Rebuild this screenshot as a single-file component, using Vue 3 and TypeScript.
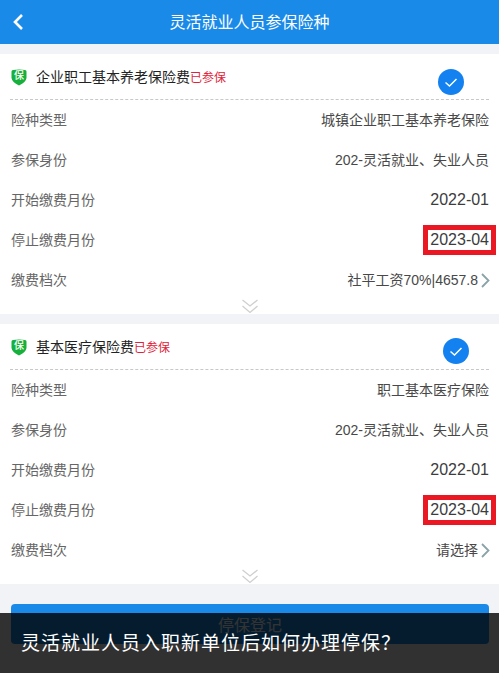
<script setup lang="ts">
interface Row { label: string; value: string; big?: boolean; mark?: boolean; arrow?: boolean }
interface Card { title: string; cls: string; rows: Row[] }
const cards: Card[] = [
  {
    title: '企业职工基本养老保险费',
    cls: 'first',
    rows: [
      { label: '险种类型', value: '城镇企业职工基本养老保险' },
      { label: '参保身份', value: '202-灵活就业、失业人员' },
      { label: '开始缴费月份', value: '2022-01', big: true },
      { label: '停止缴费月份', value: '2023-04', big: true, mark: true },
      { label: '缴费档次', value: '社平工资70%|4657.8', arrow: true },
    ],
  },
  {
    title: '基本医疗保险费',
    cls: 'second',
    rows: [
      { label: '险种类型', value: '职工基本医疗保险' },
      { label: '参保身份', value: '202-灵活就业、失业人员' },
      { label: '开始缴费月份', value: '2022-01', big: true },
      { label: '停止缴费月份', value: '2023-04', big: true, mark: true },
      { label: '缴费档次', value: '请选择', arrow: true },
    ],
  },
]
</script>

<template>
  <div class="page">
    <header class="nav">
      <svg class="back" width="14" height="18" viewBox="0 0 14 18"><path d="M11 2 L4 9 L11 16" fill="none" stroke="#fff" stroke-width="2.6" /></svg>
      <span class="nav-title">灵活就业人员参保险种</span>
    </header>

    <main class="list">
      <section v-for="card in cards" :key="card.title" class="card" :class="card.cls">
        <div class="head">
          <span class="shield">
            <svg width="16" height="17" viewBox="0 0 16 17"><path d="M0.5 2.6 Q0.5 1.2 2 1 Q8 0 14 1 Q15.5 1.2 15.5 2.6 V9 Q15 13 8 16.6 Q1 13 0.5 9 Z" fill="#17b03c" /></svg>
            <b>保</b>
          </span>
          <span class="title">{{ card.title }}</span><span class="joined">已参保</span>
          <span class="check">
            <svg width="26" height="26" viewBox="0 0 26 26"><circle cx="13" cy="13" r="13" fill="#1481f0" /><path d="M7.5 13.5 L11.5 17 L18.5 10" fill="none" stroke="#fff" stroke-width="1.5" /></svg>
          </span>
        </div>
        <div v-for="row in card.rows" :key="row.label" class="row">
          <span class="label">{{ row.label }}</span>
          <span class="value" :class="{ big: row.big, mark: row.mark }">{{ row.value }}</span>
          <svg v-if="row.arrow" class="arrow" width="9" height="15" viewBox="0 0 9 15"><path d="M1 1 L7.5 7.5 L1 14" fill="none" stroke="#8aa3a8" stroke-width="1.8" /></svg>
        </div>
        <div class="more">
          <svg width="18" height="15" viewBox="0 0 18 15"><path d="M1.5 1 L9 7 L16.5 1 M1.5 7 L9 13.5 L16.5 7" fill="none" stroke="#cfcfcf" stroke-width="1.3" /></svg>
        </div>
      </section>

      <button class="submit" type="button">停保登记</button>
    </main>

    <div class="caption">灵活就业人员入职新单位后如何办理停保？</div>
  </div>
</template>

<style>
html, body { margin: 0; background: #f2f3f7; }
</style>

<style scoped>
.page {
  position: relative;
  width: 499px;
  height: 673px;
  overflow: hidden;
  background: #f2f3f7;
  font-family: "Liberation Sans", "Noto Sans CJK SC", sans-serif;
}
.nav {
  height: 44px;
  background: #1a8ae8;
  display: flex;
  align-items: center;
  justify-content: center;
  position: relative;
}
.back { position: absolute; left: 11px; top: 13px; }
.nav-title { color: #fff; font-size: 16px; margin-top: -3px; }
.list {
  padding-top: 10px;
  display: flex;
  flex-direction: column;
  gap: 10px;
}
.card { background: #fff; height: 260px; }
.head {
  height: 45px;
  margin: 0 10px;
  border-bottom: 1px dashed #c8c8c8;
  display: flex;
  align-items: center;
  position: relative;
}
.shield {
  position: relative;
  width: 16px;
  height: 17px;
  margin-left: 1px;
  margin-right: 9px;
  margin-top: 1px;
  display: flex;
  align-items: center;
  justify-content: center;
}
.shield svg { position: absolute; left: 0; top: 0; display: block; }
.shield b {
  position: relative;
  top: -1px;
  color: #fff;
  font-size: 10px;
  line-height: 12px;
  font-weight: 500;
}
.title { font-size: 14px; color: #222; margin-top: -1px; }
.joined { font-size: 12px; color: #e0233a; margin-top: -1px; }
.check { position: absolute; right: 25px; top: 15px; width: 26px; height: 26px; }
.check svg { display: block; }
.second .check { right: 20px; top: 14px; }
.row {
  height: 40px;
  margin: 0 10px 0 11px;
  display: flex;
  align-items: center;
  font-size: 14px;
  color: #666;
}
.label { flex: 1; margin-top: -2px; }
.value { color: #484848; position: relative; margin-top: -2px; }
.value.big { font-size: 16px; margin-top: 0; color: #3c3c3c; }
.value.mark::after {
  content: "";
  position: absolute;
  left: -7px;
  right: -7px;
  top: -6px;
  bottom: -6px;
  border: 5px solid #ea1822;
  pointer-events: none;
}
.arrow { margin-left: 3px; margin-right: -1px; }
.more {
  height: 14px;
  display: flex;
  justify-content: center;
}
.more svg { display: block; margin-top: -1px; }
.submit {
  display: block;
  margin: 10px 10px 0 11px;
  height: 40px;
  width: 478px;
  border: 0;
  border-radius: 4px;
  background: #1a8ae8;
  color: #fff;
  font: inherit;
  font-size: 16px;
}
.caption {
  position: absolute;
  left: 0;
  right: 0;
  bottom: 0;
  height: 60px;
  padding: 17px 21px 0;
  box-sizing: border-box;
  background: rgba(0, 0, 0, 0.8);
  color: #fff;
  font-size: 19px;
  line-height: 27px;
  letter-spacing: 1px;
}
</style>
